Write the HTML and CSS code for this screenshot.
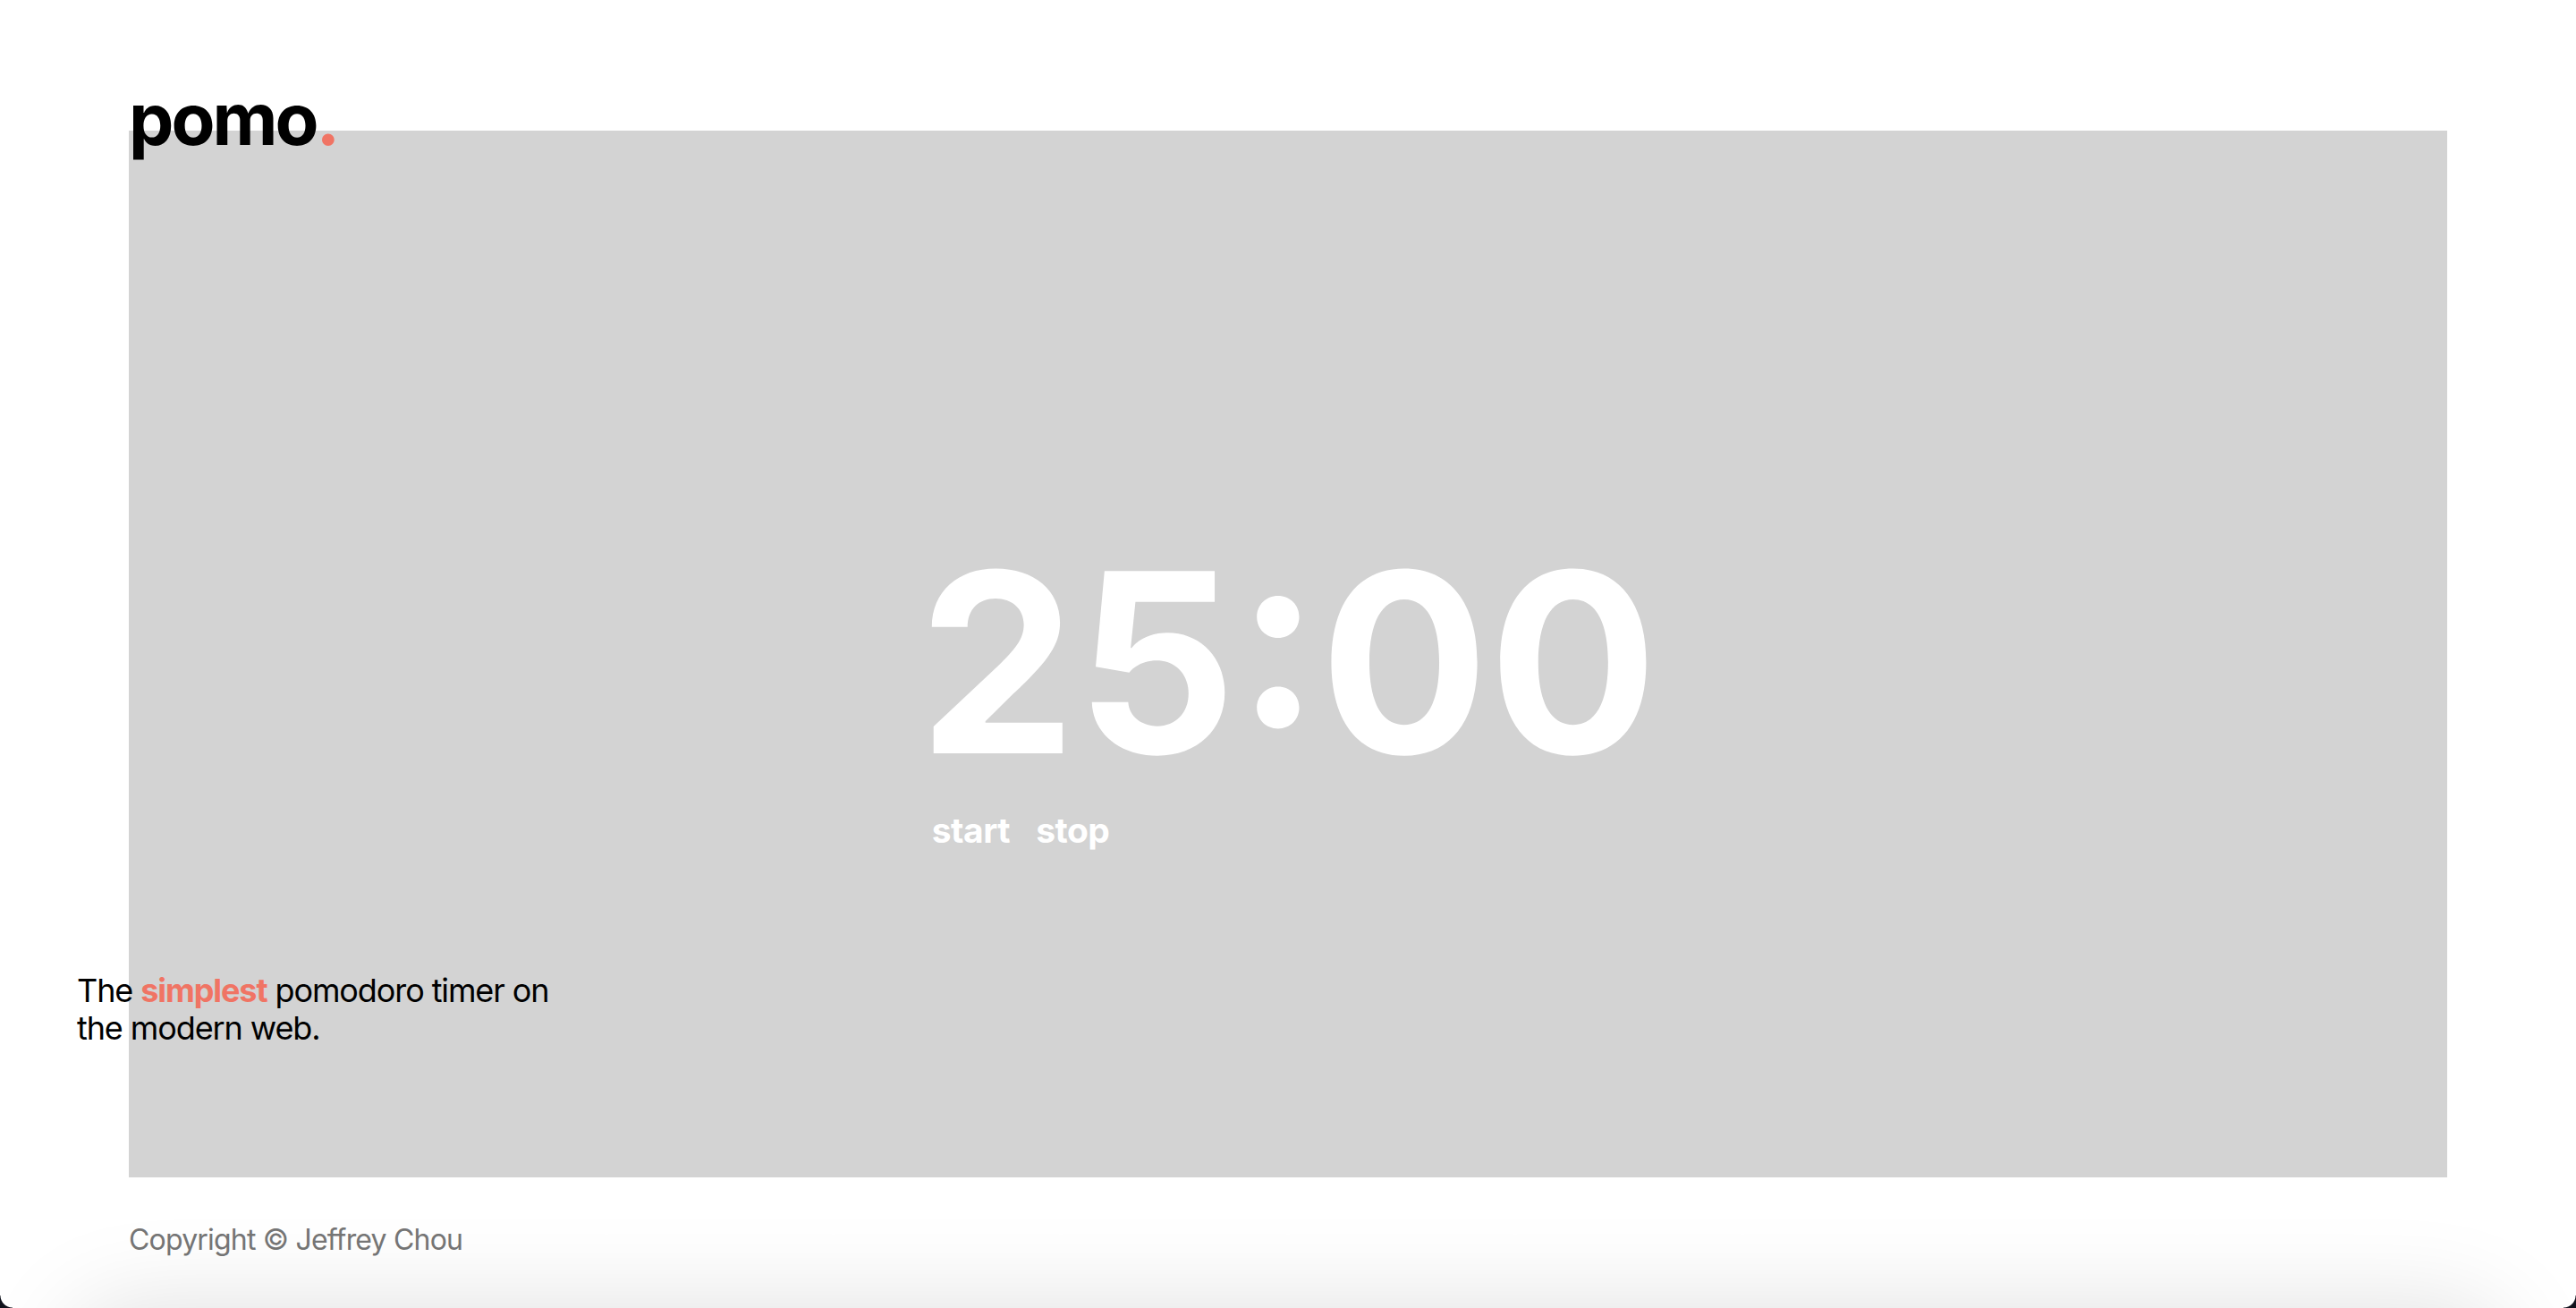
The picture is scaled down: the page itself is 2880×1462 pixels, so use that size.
FILE: index.html
```html
<!DOCTYPE html>
<html lang="en">
<head>
<meta charset="utf-8">
<title>pomo.</title>
<link rel="stylesheet" href="styles.css">
</head>
<body>
<div class="page">
  <h1 class="logo">pomo<span class="dot">.</span></h1>
  <main class="board">
    <div class="clock">
      <div class="time">25:00</div>
      <div class="controls">
        <button class="btn">start</button>
        <button class="btn">stop</button>
      </div>
    </div>
  </main>
  <p class="tagline">The <strong class="accent">simplest</strong> pomodoro timer on the modern web.</p>
  <footer class="footer">Copyright © Jeffrey Chou</footer>
</div>
<div class="shade"></div>
<div class="corner corner-left"></div>
<div class="corner corner-right"></div>
</body>
</html>
```

FILE: styles.css
```css
html, body {
  margin: 0;
  padding: 0;
  background: #ffffff;
}

body {
  font-family: Inter, "Noto Sans", "Liberation Sans", sans-serif;
  color: #000;
  height: 1462px;
  overflow: hidden;
}

.page {
  position: relative;
  padding: 146px 144px 0;
}

.logo {
  position: absolute;
  left: 144px;
  top: 93px;
  margin: 0;
  font-size: 80px;
  line-height: 1;
  font-weight: 700;
  letter-spacing: -3px;
  z-index: 2;
}

.dot {
  color: #f07464;
}

.board {
  height: 1170px;
  background: #d3d3d3;
  display: flex;
  justify-content: center;
  align-items: flex-start;
  padding-top: 455px;
  box-sizing: border-box;
}

.clock {
  display: flex;
  flex-direction: column;
  align-items: flex-start;
}

.time {
  font-size: 280px;
  line-height: 1;
  font-weight: 700;
  letter-spacing: 0;
  color: #fff;
}

.controls {
  display: flex;
  gap: 29px;
  margin-top: 27px;
  padding-left: 15px;
}

.btn {
  font-family: inherit;
  font-size: 39px;
  line-height: 1;
  font-weight: 700;
  letter-spacing: -0.5px;
  color: #fff;
  background: none;
  border: 0;
  padding: 0;
  margin: 0;
}

.tagline {
  position: absolute;
  left: 86px;
  top: 1086px;
  width: 550px;
  margin: 0;
  font-size: 36px;
  line-height: 42px;
  font-weight: 400;
  letter-spacing: -1.1px;
  z-index: 2;
}

.accent {
  color: #f07464;
  font-weight: 700;
}

.footer {
  margin-top: 50px;
  font-size: 32px;
  line-height: 40px;
  letter-spacing: -0.8px;
  color: #767676;
}

.shade {
  position: fixed;
  left: 80px;
  right: 80px;
  top: 1462px;
  height: 200px;
  border-radius: 60px;
  box-shadow: 0 0 110px 0 rgba(0, 0, 0, 0.13);
}

.corner {
  position: fixed;
  bottom: 0;
  width: 14px;
  height: 14px;
}

.corner-left {
  left: 0;
  background: radial-gradient(circle 14px at 100% 0, transparent 13px, #10121c 14px);
}

.corner-right {
  right: 0;
  background: radial-gradient(circle 14px at 0 0, transparent 13px, #10121c 14px);
}
```
